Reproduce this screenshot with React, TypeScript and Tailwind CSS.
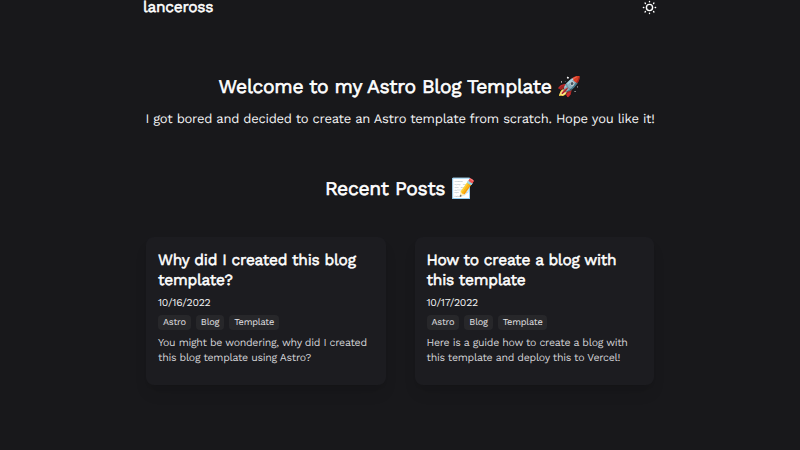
import React from 'react';

const posts = [
  { title: 'Why did I created this blog template?', date: '10/16/2022', text: 'You might be wondering, why did I created this blog template using Astro?' },
  { title: 'How to create a blog with this template', date: '10/17/2022', text: 'Here is a guide how to create a blog with this template and deploy this to Vercel!' },
];
const tags = ['Astro', 'Blog', 'Template'];

function SunIcon() {
  return (
    <svg className="size-4" viewBox="0 0 16 16" fill="none" stroke="currentColor" strokeWidth="1.4" strokeLinecap="round">
      <circle cx="8.5" cy="7.5" r="3.1" />
      <path d="M8.5 1.4v.4M8.5 13.2v.4M2.4 7.5h.4M14.2 7.5h.4M4.1 3.1l.3.3M12.6 11.6l.3.3M4.1 11.9l.3-.3M12.6 3.4l.3-.3" />
    </svg>
  );
}

export default function App() {
  return (
    <div className="h-[450px] bg-[#18181b] font-['Work_Sans','Inter',sans-serif] text-white [text-rendering:geometricPrecision]">
      <div className="mx-auto w-[514px]">
        <header className="flex h-[15px] items-center justify-between">
          <span className="text-[15.5px] leading-[15px] tracking-[-0.26px] [-webkit-text-stroke:0.55px_white]">lanceross</span>
          <SunIcon />
        </header>
        <main className="text-center">
          <h1 className="mt-[58px] text-[19.3px] leading-7 tracking-[-0.28px] whitespace-nowrap [-webkit-text-stroke:0.65px_white]">Welcome to my Astro Blog Template 🚀</h1>
          <p className="mt-2 text-[13px] leading-[22px] tracking-[-0.25px] whitespace-nowrap text-zinc-100">I got bored and decided to create an Astro template from scratch. Hope you like it!</p>
          <h2 className="mt-[44px] text-[19.3px] leading-7 tracking-[-0.28px] [-webkit-text-stroke:0.65px_white]">Recent Posts 📝</h2>
          <div className="mx-[3px] mt-[34px] grid grid-cols-2 gap-[29px] text-left">
            {posts.map((post) => (
              <article key={post.date} className="h-[147.5px] rounded-lg bg-[#1c1c20] px-3 pt-[13px] shadow-lg">
                <h3 className="text-[15.5px] leading-5 tracking-[-0.23px] [-webkit-text-stroke:0.55px_white]">{post.title}</h3>
                <p className="mt-[5px] text-[10.5px] leading-4 tracking-[-0.26px] text-zinc-100">{post.date}</p>
                <div className="mt-1 flex gap-[5px]">
                  {tags.map((tag) => (
                    <span key={tag} className="h-[15px] rounded bg-[#27272a] px-[5px] text-[9.2px] leading-[16px] tracking-[-0.2px] text-zinc-200">{tag}</span>
                  ))}
                </div>
                <p className="mt-[5px] text-[10.6px] leading-[15px] tracking-[-0.29px] text-zinc-300">{post.text}</p>
              </article>
            ))}
          </div>
        </main>
      </div>
    </div>
  );
}
